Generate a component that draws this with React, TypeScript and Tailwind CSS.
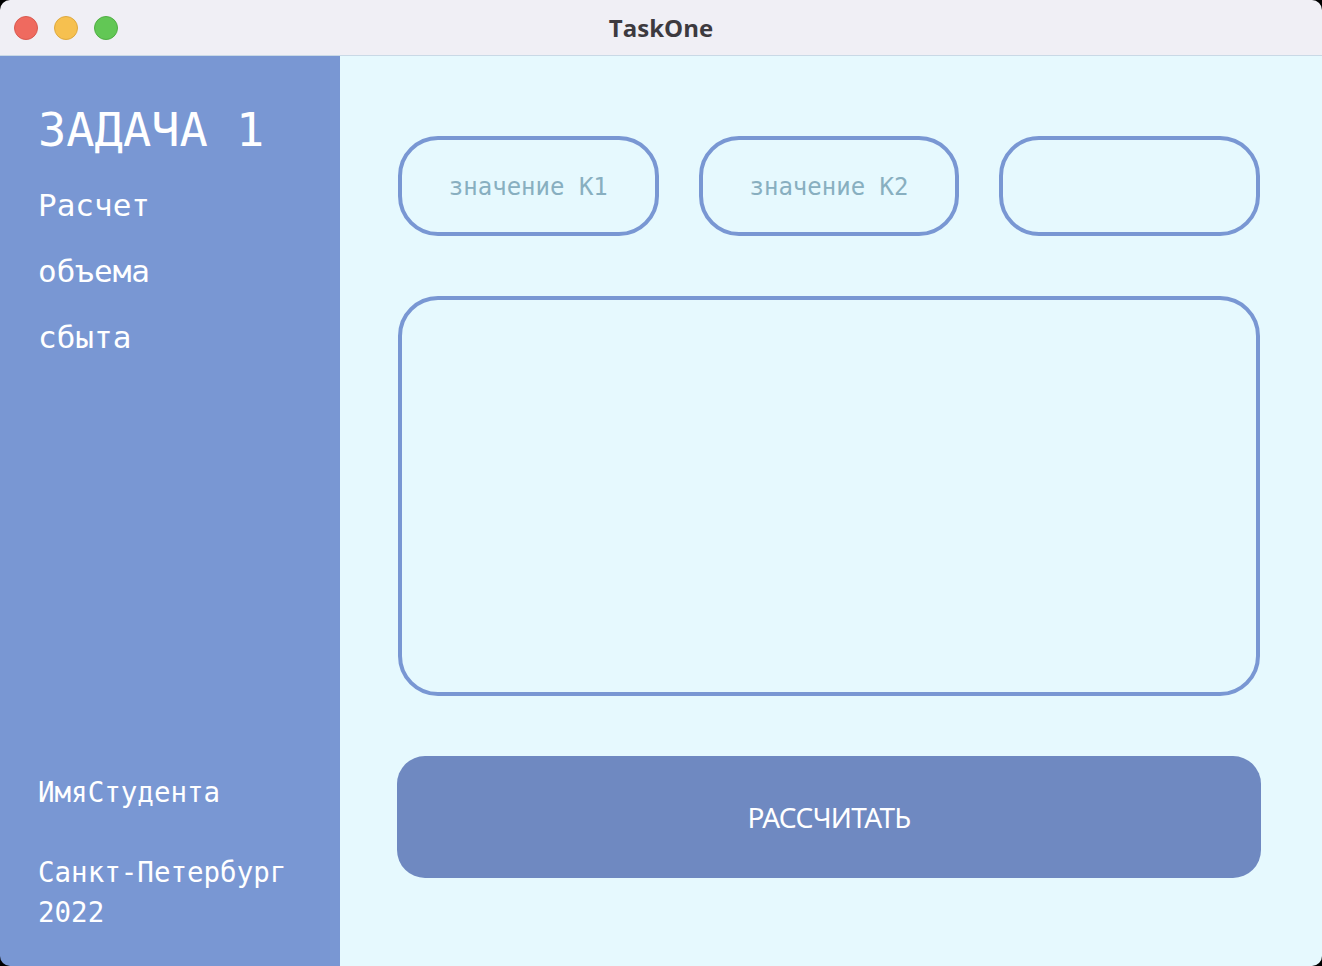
import React from "react";

/* ---------------------------------------------------------
 * Окно приложения TaskOne – Задача 1
 * --------------------------------------------------------- */
const mono = { fontFamily: '"DejaVu Sans Mono", "Liberation Mono", monospace' };

function TitleBar() {
  return (
    <div className="relative h-[56px] bg-[#f0eff5] border-b border-[#c9d9e6] flex items-center justify-center shrink-0">
      <div className="absolute left-[14px] top-[16px] flex gap-[16px]">
        <span className="w-[24px] h-[24px] rounded-full bg-[#ef6a5f] border border-[#d95a50]" />
        <span className="w-[24px] h-[24px] rounded-full bg-[#f6c04f] border border-[#dea93f]" />
        <span className="w-[24px] h-[24px] rounded-full bg-[#62c755] border border-[#50ae44]" />
      </div>
      <span
        className="text-[24px] font-bold text-[#3d3a3f]"
        style={{ fontFamily: '"Open Sans", "Liberation Sans", sans-serif' }}
      >
        TaskOne
      </span>
    </div>
  );
}

function Sidebar() {
  return (
    <aside
      className="w-[340px] shrink-0 bg-[#7997d3] text-white flex flex-col justify-between pl-[38px] pt-[44px] pb-[34px]"
      style={mono}
    >
      <div>
        <div className="text-[47px] leading-[60px]">ЗАДАЧА 1</div>
        <div className="mt-[12px] text-[31px] leading-[66px]">
          <div>Расчет</div>
          <div>объема</div>
          <div>сбыта</div>
        </div>
      </div>
      <div className="text-[27.5px] leading-[40px]">
        <div>ИмяСтудента</div>
        <div className="mt-[40px]">Санкт-Петербург</div>
        <div>2022</div>
      </div>
    </aside>
  );
}

function Field({ placeholder }: { placeholder?: string }) {
  return (
    <div
      className="h-[100px] rounded-[40px] border-[4px] border-[#7997d3] flex items-center justify-center pt-[2px] text-[24px] text-[#88afc0]"
      style={mono}
    >
      {placeholder}
    </div>
  );
}

export default function App() {
  return (
    <div className="w-[1322px] h-[966px] bg-black">
      <div className="w-full h-full rounded-[10px] overflow-hidden flex flex-col">
        <TitleBar />
        <div className="flex flex-1 min-h-0">
          <Sidebar />
          <main className="flex-1 bg-[#e6f9fe] pl-[58px] pr-[62px] pt-[80px]">
            <div className="grid grid-cols-3 gap-[40px]">
              <Field placeholder="значение К1" />
              <Field placeholder="значение К2" />
              <Field />
            </div>
            <div className="mt-[60px] h-[400px] rounded-[40px] border-[4px] border-[#7997d3]" />
            <button
              type="button"
              className="mt-[60px] -mx-[1px] w-[calc(100%+2px)] h-[122px] rounded-[28px] bg-[#6f89c1] text-white text-[28px] tracking-tight"
              style={{ fontFamily: '"Noto Sans", "Liberation Sans", sans-serif' }}
            >
              РАССЧИТАТЬ
            </button>
          </main>
        </div>
      </div>
    </div>
  );
}
